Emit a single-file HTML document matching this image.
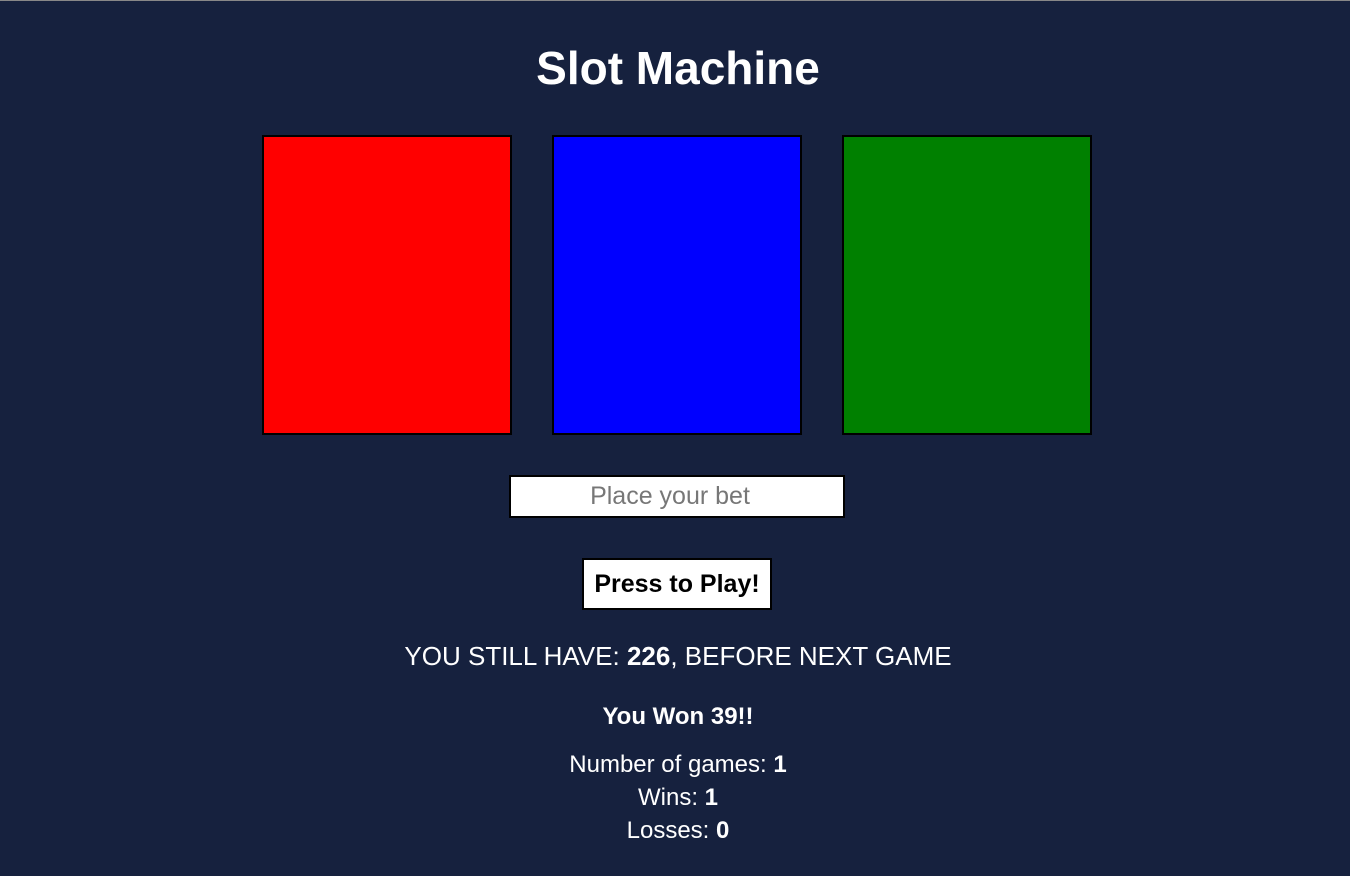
<!DOCTYPE html>
<html><head><style>
html,body{margin:0;padding:0;}
body{width:1350px;height:876px;background:#16213e;font-family:"Liberation Sans",sans-serif;color:#fff;position:relative;overflow:hidden;border-top:1px solid #888;box-sizing:border-box;}
h1{position:absolute;top:41px;left:3px;width:1350px;text-align:center;margin:0;font-size:46px;font-weight:bold;line-height:52px;}
.box{position:absolute;top:134px;width:246px;height:296px;border:2px solid #000;}
.inp{position:absolute;left:509px;top:474px;width:332px;height:39px;background:#fff;border:2px solid #000;color:#777;font-size:25px;text-align:center;line-height:39px;text-indent:-14px;}
.btn{position:absolute;left:582px;top:557px;width:186px;height:48px;background:#fff;border:2px solid #000;color:#000;font-size:25px;font-weight:bold;text-align:center;line-height:48px;}
.t{position:absolute;left:3px;width:1350px;text-align:center;}
</style></head><body>
<h1>Slot Machine</h1>
<div class="box" style="left:262px;background:#f00"></div>
<div class="box" style="left:552px;background:#00f"></div>
<div class="box" style="left:842px;background:#008000"></div>
<div class="inp">Place your bet</div>
<div class="btn">Press to Play!</div>
<div class="t" style="top:640px;font-size:26px;">YOU STILL HAVE: <b>226</b>, BEFORE NEXT GAME</div>
<div class="t" style="top:702px;font-size:24px;font-weight:bold;">You Won 39!!</div>
<div class="t" style="top:747px;font-size:24px;line-height:33px;">Number of games: <b>1</b><br>Wins: <b>1</b><br>Losses: <b>0</b></div>
</body></html>
